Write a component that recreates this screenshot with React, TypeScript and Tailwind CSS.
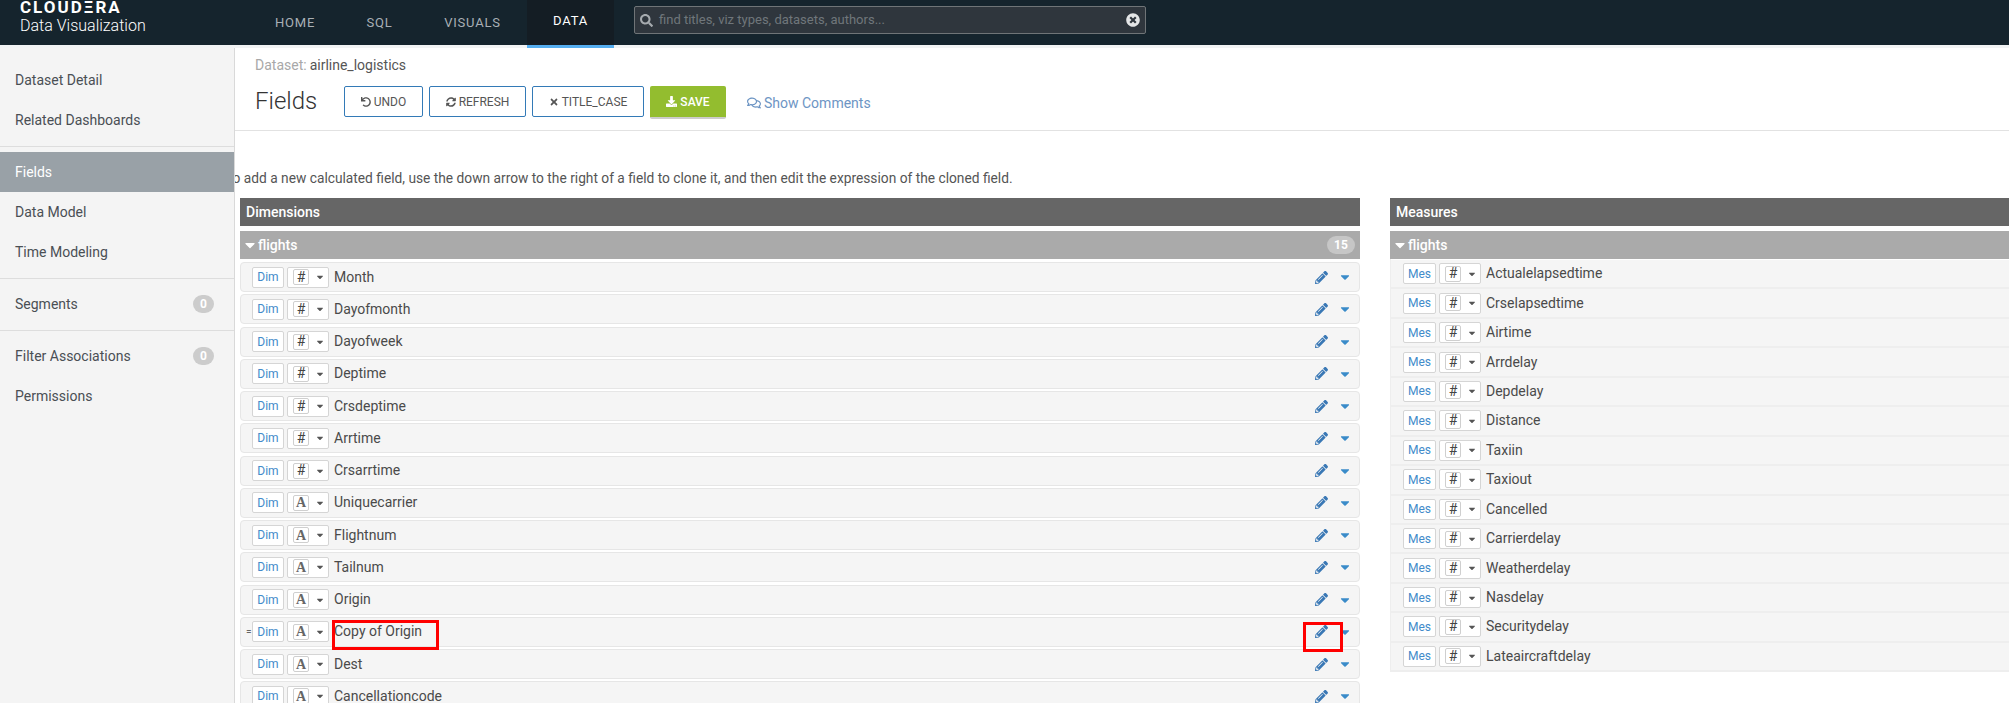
import { FaCaretDown, FaDownload, FaPencilAlt, FaRegComments, FaSearch, FaSyncAlt, FaTimes, FaTimesCircle, FaUndo } from "react-icons/fa"

const dimensions: [string, string][] = [
  ["Month", "#"],
  ["Dayofmonth", "#"],
  ["Dayofweek", "#"],
  ["Deptime", "#"],
  ["Crsdeptime", "#"],
  ["Arrtime", "#"],
  ["Crsarrtime", "#"],
  ["Uniquecarrier", "A"],
  ["Flightnum", "A"],
  ["Tailnum", "A"],
  ["Origin", "A"],
  ["Copy of Origin", "A"],
  ["Dest", "A"],
  ["Cancellationcode", "A"],
]

const measures = [
  "Actualelapsedtime",
  "Crselapsedtime",
  "Airtime",
  "Arrdelay",
  "Depdelay",
  "Distance",
  "Taxiin",
  "Taxiout",
  "Cancelled",
  "Carrierdelay",
  "Weatherdelay",
  "Nasdelay",
  "Securitydelay",
  "Lateaircraftdelay",
]

const SideItem = ({ label, count, active }: { label: string; count?: number; active?: boolean }) => (
  <div className={`h-10 pl-[15px] pr-[20px] flex items-center justify-between text-[14px] ${active ? "bg-[#99a1a7] text-white" : "text-[#4a4f54]"}`}>
    <span>{label}</span>
    {count !== undefined && (
      <span className="w-[21px] h-[18px] rounded-full bg-[#cccccc] text-white text-[12px] font-bold flex items-center justify-center">{count}</span>
    )}
  </div>
)

const TypeBox = ({ kind, h }: { kind: string; h: string }) => (
  <div className={`${h} w-[42px] ml-[3px] bg-white border border-[#d5d5d5] rounded-[2px] flex items-center pl-[5px] shrink-0`}>
    <span className={`w-4 h-4 border border-[#cfcfcf] rounded-[2px] flex items-center justify-center ${kind === "A" ? "font-['Liberation_Serif'] font-bold text-[14px] text-[#666]" : "text-[14px] text-[#444]"}`}>
      {kind}
    </span>
    <FaCaretDown className="ml-[6px] text-[#555] text-[10px]" />
  </div>
)

const TopButton = ({ icon, label, w }: { icon: React.ReactNode; label: string; w: string }) => (
  <button className={`${w} h-[31px] border border-[#337ab7] rounded-[2px] bg-white text-[#555] text-[12px] flex items-center justify-center gap-[3px]`}>
    {icon}
    {label}
  </button>
)

const DimRow = ({ name, kind }: { name: string; kind: string }) => {
  const calc = name === "Copy of Origin"
  return (
    <div className="h-[30px] mb-[2.25px] bg-[#f5f5f5] border border-[#e6e6e6] rounded-[4px] flex items-center pl-[11px] relative">
      {calc && <span className="absolute left-[5px] text-[#666] text-[10px]">=</span>}
      <div className="w-[32px] h-[21px] bg-white border border-[#d5d5d5] rounded-[2px] text-[#428bca] text-[12px] flex items-center justify-center shrink-0">Dim</div>
      <TypeBox kind={kind} h="h-[21px]" />
      <span className="ml-[5px] text-[14px] text-[#4a4a4a]">{name}</span>
      <FaPencilAlt className="ml-auto text-[#3a78b5] text-[13px]" />
      <FaCaretDown className="ml-[10px] mr-[7px] text-[#3a8bc9] text-[14px]" />
    </div>
  )
}

const MesRow = ({ name }: { name: string }) => (
  <div className="h-[29.45px] bg-[#f5f5f5] border-b-2 border-[#eeeeee] flex items-center pl-[12px]">
    <div className="w-[33px] h-[21px] bg-white border border-[#d5d5d5] rounded-[2px] text-[#428bca] text-[12px] flex items-center justify-center shrink-0">Mes</div>
    <TypeBox kind="#" h="h-[21px]" />
    <span className="ml-[5px] text-[14px] text-[#4a4a4a]">{name}</span>
  </div>
)

const App = () => {
  return (
    <div className="h-[703px] w-[2009px] overflow-hidden bg-white relative font-['Roboto',sans-serif]">
      <div className="h-12 bg-[#f1f3f4]">
        <header className="h-[45px] bg-[#15242d] flex text-white">
          <div className="w-[249px] pl-[20px] shrink-0 relative">
            <div className="text-[17px] font-bold tracking-[2px] leading-[14px]">CLOUDΞRA</div>
            <div className="text-[16px] font-light leading-[20px] mt-[2px]">Data Visualization</div>
          </div>
          <nav className="flex h-12 text-[13px] tracking-[0.8px] shrink-0">
            <div className="w-[92px] h-[45px] flex items-center justify-center text-[#a9b0b5]">HOME</div>
            <div className="w-[77px] h-[45px] flex items-center justify-center text-[#a9b0b5]">SQL</div>
            <div className="w-[109px] h-[45px] flex items-center justify-center text-[#a9b0b5]">VISUALS</div>
            <div className="w-[87px] h-12 pb-[3px] flex items-center justify-center bg-[#141d24] border-b-[3px] border-[#55aef0] text-white">DATA</div>
          </nav>
          <div className="ml-[20px] mt-[6px] w-[512px] h-[28px] bg-[#2f363d] border border-[#6f7477] rounded-[2px] flex items-center pl-[5px] pr-[5px]">
            <FaSearch className="text-[#a6abaf] text-[13px]" />
            <span className="ml-[6px] text-[13px] text-[#6f767b]">find titles, viz types, datasets, authors...</span>
            <FaTimesCircle className="ml-auto text-[#e4e6e7] text-[14px]" />
          </div>
        </header>
      </div>

      <div className="flex h-[655px]">
        <aside className="w-[235px] shrink-0 bg-[#f4f4f4] border-r border-[#d9d9d9] pt-[12px]">
          <SideItem label="Dataset Detail" />
          <SideItem label="Related Dashboards" />
          <div className="border-t border-[#dddddd] mt-[6px] mb-[5px]" />
          <SideItem label="Fields" active />
          <SideItem label="Data Model" />
          <SideItem label="Time Modeling" />
          <div className="border-t border-[#dddddd] mt-[6px] mb-[5px]" />
          <SideItem label="Segments" count={0} />
          <div className="border-t border-[#dddddd] mt-[6px] mb-[5px]" />
          <SideItem label="Filter Associations" count={0} />
          <SideItem label="Permissions" />
        </aside>

        <main className="flex-1 min-w-0 overflow-hidden">
          <div className="h-[83px] border-b border-[#e2e2e2] pl-[20px]">
            <div className="pt-[9px] text-[14px] leading-[16px]">
              <span className="text-[#a8a8a8]">Dataset:</span>
              <span className="text-[#555] ml-[3px]">airline_logistics</span>
            </div>
            <div className="flex items-center mt-[13px]">
              <h1 className="w-[89px] text-[24px] font-light text-[#333] leading-[31px]">Fields</h1>
              <div className="flex gap-[6px]">
                <TopButton icon={<FaUndo className="text-[10px]" />} label="UNDO" w="w-[79px]" />
                <TopButton icon={<FaSyncAlt className="text-[10px]" />} label="REFRESH" w="w-[97px]" />
                <TopButton icon={<FaTimes className="text-[10px]" />} label="TITLE_CASE" w="w-[112px]" />
                <button className="w-[76px] h-[33px] -mb-[2px] bg-[#93bd2f] border-b-2 border-[#cccccc] rounded-[2px] text-white text-[12px] font-medium flex items-center justify-center gap-[3px] self-start">
                  <FaDownload className="text-[11px]" />
                  SAVE
                </button>
              </div>
              <span className="ml-[21px] mt-[3px] text-[14px] text-[#6d95c4] flex items-center gap-[3px]">
                <FaRegComments className="text-[14px]" />
                Show Comments
              </span>
            </div>
          </div>

          <p className="pt-[39px] -ml-[10px] whitespace-nowrap text-[13.75px] leading-[16px] text-[#555]">
            To add a new calculated field, use the down arrow to the right of a field to clone it, and then edit the expression of the cloned field.
          </p>

          <div className="flex mt-[12px] pl-[5px] gap-[30px]">
            <section className="w-[1120px] shrink-0">
              <div className="h-[28px] bg-[#666666] text-white text-[14px] font-medium pl-[6px] flex items-center">Dimensions</div>
              <div className="h-[28px] mt-[5px] mb-[3px] bg-[#aaaaaa] text-white text-[14px] font-medium pl-[2px] pr-[5px] flex items-center">
                <FaCaretDown className="text-[16px]" />
                flights
                <span className="ml-auto w-[28px] h-[18px] rounded-full bg-[#c6c6c6] text-[12px] font-bold flex items-center justify-center">15</span>
              </div>
              {dimensions.map(([name, kind]) => (
                <DimRow key={name} name={name} kind={kind} />
              ))}
            </section>

            <section className="w-[619px] shrink-0">
              <div className="h-[28px] bg-[#666666] text-white text-[14px] font-medium pl-[6px] flex items-center">Measures</div>
              <div className="h-[28px] mt-[5px] bg-[#aaaaaa] text-white text-[14px] font-medium pl-[2px] flex items-center">
                <FaCaretDown className="text-[16px]" />
                flights
              </div>
              <div className="border-l border-[#eeeeee] pt-[1px]">
                {measures.map((name) => (
                  <MesRow key={name} name={name} />
                ))}
              </div>
            </section>
          </div>
        </main>
      </div>

      {/* red annotation boxes drawn over the screenshot */}
      <div className="absolute left-[332px] top-[620px] w-[107px] h-[30px] border-[3px] border-[#ff0000]" />
      <div className="absolute left-[1303px] top-[622px] w-[40px] h-[30px] border-[3px] border-[#ff0000]" />
    </div>
  )
}

export default App
